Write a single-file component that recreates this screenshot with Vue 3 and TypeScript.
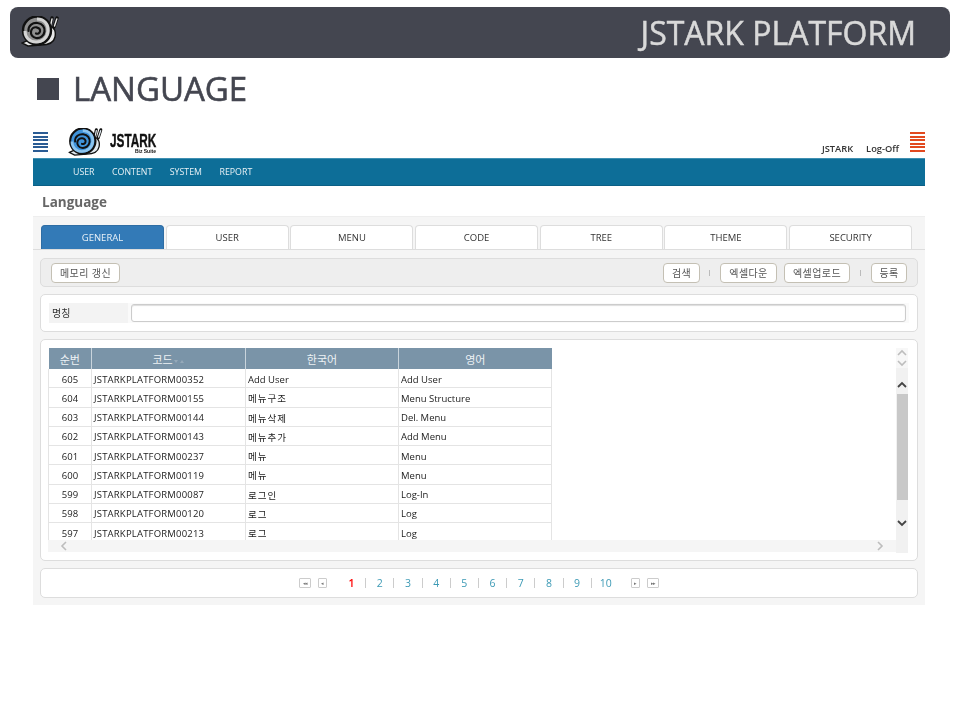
<template>
  <div class="page">
    <header class="slide-bar">
      <svg class="snail-grey" viewBox="0 0 38 31">
        <defs>
          <symbol id="snail" viewBox="0 0 38 31">
            <path d="M29 11 L31 2 M33 11 L36 2" stroke="#111" stroke-width="3.4" stroke-linecap="round" />
            <path d="M29.5 10 L31 3 M33.5 10 L35.8 3" stroke="var(--foot)" stroke-width="1.4" stroke-linecap="round" />
            <path d="M28 10 C34 11 35 16 34 21 C33 26 28 29 20 29 L7 30 L1 27 L8 24 Z" fill="var(--foot)" stroke="#111" stroke-width="1.4" />
            <circle cx="16" cy="14.5" r="14" fill="var(--shell)" stroke="#111" stroke-width="2.4" />
            <path d="M16 3 C24 3 27.5 9 27 15 C26.5 22 21 26 15 26 C8 26 4 21 4 15" fill="none" stroke="var(--shell-light)" stroke-width="3" />
            <path d="M7.5 15 C7 9 12 6.5 16.5 7 C21.5 7.5 24 11.5 23.5 15.5 C23 20 19 22.5 15 22 C11.5 21.5 9.5 18.5 10 15.5 C10.5 12.5 13 11 15.5 11.3 C18 11.7 19.5 13.5 19 15.5 C18.6 17.3 16.5 18.2 15 17.5" fill="none" stroke="#111" stroke-width="2.2" stroke-linecap="round" />
          </symbol>
        </defs>
        <use href="#snail" />
      </svg>
      <span class="slide-title">JSTARK PLATFORM</span>
    </header>

    <h1 class="slide-heading"><i class="heading-mark"></i>LANGUAGE</h1>

    <main class="app" lang="ko">
      <div class="app-head">
        <div class="lines lines-blue"><span v-for="n in 6" :key="n"></span></div>
        <svg class="snail-blue" viewBox="0 0 38 31"><use href="#snail" /></svg>
        <div class="brand">
          <strong>JSTARK</strong>
          <small>Biz Suite</small>
        </div>
        <div class="user-box">
          <span>JSTARK</span>
          <span>Log-Off</span>
        </div>
        <div class="lines lines-red"><span v-for="n in 6" :key="n"></span></div>
      </div>

      <nav class="main-nav">
        <a v-for="item in navItems" :key="item">{{ item }}</a>
      </nav>

      <h2 class="page-title">Language</h2>

      <section class="content">
        <div class="tabs">
          <button
            v-for="(tab, i) in tabs"
            :key="tab"
            class="tab"
            :class="{ active: i === 0 }"
          >
            {{ tab }}
          </button>
        </div>

        <div class="panel toolbar">
          <button class="btn">메모리 갱신</button>
          <div class="toolbar-right">
            <button class="btn btn-search">검색</button>
            <i class="sep"></i>
            <button class="btn btn-down">엑셀다운</button>
            <button class="btn btn-up">엑셀업로드</button>
            <i class="sep"></i>
            <button class="btn btn-add">등록</button>
          </div>
        </div>

        <div class="panel search">
          <label class="search-label">명칭</label>
          <div class="search-field"><input type="text" /></div>
        </div>

        <div class="panel grid-panel">
          <div class="grid-main">
            <div class="grid-view">
              <table class="grid">
                <colgroup>
                  <col style="width: 43px" />
                  <col style="width: 154px" />
                  <col style="width: 153px" />
                  <col style="width: 153px" />
                </colgroup>
                <thead>
                  <tr>
                    <th>순번</th>
                    <th>
                      코드<svg class="sort" viewBox="0 0 12 6">
                        <path d="M1 2 H5 L3 5 Z M7 5 H11 L9 2 Z" />
                      </svg>
                    </th>
                    <th>한국어</th>
                    <th>영어</th>
                  </tr>
                </thead>
                <tbody>
                  <tr v-for="row in rows" :key="row.no">
                    <td class="no">{{ row.no }}</td>
                    <td class="code">{{ row.code }}</td>
                    <td :class="{ hangul: isHangul(row.ko) }">{{ row.ko }}</td>
                    <td>{{ row.en }}</td>
                  </tr>
                </tbody>
              </table>
            </div>
            <div class="hscroll">
              <svg viewBox="0 0 8 10"><path d="M6 1 L2 5 L6 9" /></svg>
              <svg viewBox="0 0 8 10"><path d="M2 1 L6 5 L2 9" /></svg>
            </div>
          </div>
          <div class="vscroll">
            <div class="vscroll-sort">
              <svg viewBox="0 0 10 8"><path d="M1 6 L5 2 L9 6" /></svg>
              <svg viewBox="0 0 10 8"><path d="M1 2 L5 6 L9 2" /></svg>
            </div>
            <div class="vscroll-track">
              <svg class="dark" viewBox="0 0 10 8"><path d="M1 6 L5 2 L9 6" /></svg>
              <div class="thumb"></div>
              <svg class="dark" viewBox="0 0 10 8"><path d="M1 2 L5 6 L9 2" /></svg>
            </div>
          </div>
        </div>

        <div class="panel pager">
          <span class="page-btn wide">◂◂</span>
          <span class="page-btn">◂</span>
          <div class="pages">
            <a
              v-for="n in 10"
              :key="n"
              class="page-no"
              :class="{ current: n === 1 }"
            >{{ n }}</a>
          </div>
          <span class="page-btn">▸</span>
          <span class="page-btn wide">▸▸</span>
        </div>
      </section>
    </main>
  </div>
</template>

<script setup lang="ts">
interface LangRow {
  no: number
  code: string
  ko: string
  en: string
}

const navItems: string[] = ['USER', 'CONTENT', 'SYSTEM', 'REPORT']
const tabs: string[] = ['GENERAL', 'USER', 'MENU', 'CODE', 'TREE', 'THEME', 'SECURITY']

const rows: LangRow[] = [
  { no: 605, code: 'JSTARKPLATFORM00352', ko: 'Add User', en: 'Add User' },
  { no: 604, code: 'JSTARKPLATFORM00155', ko: '메뉴구조', en: 'Menu Structure' },
  { no: 603, code: 'JSTARKPLATFORM00144', ko: '메뉴삭제', en: 'Del. Menu' },
  { no: 602, code: 'JSTARKPLATFORM00143', ko: '메뉴추가', en: 'Add Menu' },
  { no: 601, code: 'JSTARKPLATFORM00237', ko: '메뉴', en: 'Menu' },
  { no: 600, code: 'JSTARKPLATFORM00119', ko: '메뉴', en: 'Menu' },
  { no: 599, code: 'JSTARKPLATFORM00087', ko: '로그인', en: 'Log-In' },
  { no: 598, code: 'JSTARKPLATFORM00120', ko: '로그', en: 'Log' },
  { no: 597, code: 'JSTARKPLATFORM00213', ko: '로그', en: 'Log' }
]

const isHangul = (text: string) => /[가-힣]/.test(text)
</script>

<style>
html,
body {
  margin: 0;
  background: #fff;
}
</style>

<style scoped>
.page {
  width: 960px;
  height: 720px;
  overflow: hidden;
  padding-top: 7px;
  box-sizing: border-box;
  font-family: 'Open Sans', 'Noto Sans CJK KR', sans-serif;
  color: #333;
  filter: blur(0.35px);
}

.slide-bar {
  height: 51px;
  margin: 0 10px;
  padding: 0 34px 0 11px;
  display: flex;
  align-items: center;
  justify-content: space-between;
  background: #444650;
  border-radius: 8px;
}

.snail-grey {
  width: 38px;
  height: 31px;
  margin-top: -3px;
  --shell: #8f8f8f;
  --shell-light: #d4d4d4;
  --foot: #e8e8e8;
}

.slide-title {
  font-size: 32px;
  line-height: 51px;
  color: #d9d9d9;
  -webkit-text-stroke: 0.5px #d9d9d9;
}

.slide-heading {
  height: 44px;
  margin: 8px 0 0 37px;
  display: flex;
  align-items: center;
  gap: 14px;
  font-size: 33px;
  font-weight: 400;
  color: #444650;
  -webkit-text-stroke: 0.6px #444650;
}

.heading-mark {
  width: 22px;
  height: 22px;
  margin-top: 2px;
  background: #444650;
}

.app {
  width: 892px;
  margin: 15px 0 0 33px;
}

.app-head {
  height: 33px;
  display: flex;
  align-items: flex-start;
}

.lines {
  width: 15px;
  margin-top: 7px;
  display: flex;
  flex-direction: column;
  gap: 1.6px;
}

.lines span {
  height: 2px;
}

.lines-blue span {
  background: #2b5c94;
}

.lines-red span {
  background: #e2491f;
}

.snail-blue {
  width: 35px;
  height: 28px;
  margin: 3px 0 0 20px;
  --shell: #3f93da;
  --shell-light: #8cc4ee;
  --foot: #dfe8ee;
}

.brand {
  width: 46px;
  margin: 8px 0 0 7px;
  display: flex;
  flex-direction: column;
  align-items: flex-end;
  color: #111;
}

.brand strong {
  align-self: flex-start;
  font-family: 'Liberation Sans', sans-serif;
  font-weight: 700;
  font-size: 19px;
  line-height: 15px;
  transform: scaleX(0.62);
  transform-origin: left;
  -webkit-text-stroke: 0.4px #111;
}

.brand small {
  font-family: 'Liberation Sans', sans-serif;
  font-weight: 700;
  font-size: 5px;
  line-height: 6px;
}

.user-box {
  margin: 17px 11px 0 auto;
  display: flex;
  gap: 13px;
  font-size: 9.3px;
  line-height: 14px;
  font-weight: 600;
  color: #333;
}

.main-nav {
  height: 28px;
  padding-left: 40px;
  box-sizing: border-box;
  display: flex;
  align-items: center;
  gap: 17.5px;
  background: #0d6e98;
  border-top: 1px solid #3f90b2;
  border-bottom: 1px solid #0b5f85;
}

.main-nav a {
  font-size: 8.8px;
  color: #e8f1f5;
}

.page-title {
  height: 30px;
  margin: 0;
  padding-left: 9px;
  font-size: 13.5px;
  line-height: 33px;
  font-weight: 700;
  color: #666;
}

.content {
  height: 389px;
  padding-top: 8px;
  box-sizing: border-box;
  background: #f5f5f5;
  border-top: 1px solid #eee;
}

.tabs {
  height: 25px;
  padding-left: 8px;
  box-sizing: border-box;
  display: flex;
  gap: 1.7px;
  border-bottom: 1px solid #ddd;
}

.tab {
  width: 123px;
  height: 24px;
  padding: 0;
  font: inherit;
  font-size: 9.5px;
  color: #333;
  background: #fff;
  border: 1px solid #ddd;
  border-bottom: 0;
  border-radius: 4px 4px 0 0;
}

.tab.active {
  color: #e8f1f8;
  background: #337ab7;
  border-color: #2e6da4;
}

.panel {
  width: 878px;
  margin: 0 0 7px 7px;
  box-sizing: border-box;
  background: #fff;
  border: 1px solid #ddd;
  border-radius: 5px;
}

.toolbar {
  height: 29px;
  margin-top: 8px;
  padding: 0 10px;
  display: flex;
  align-items: center;
  justify-content: space-between;
  background: #eee;
}

.toolbar-right {
  display: flex;
  align-items: center;
}

.btn {
  height: 20px;
  padding: 0;
  width: 69px;
  font: inherit;
  font-size: 10px;
  letter-spacing: 0.4px;
  color: #555;
  background: #fff;
  border: 1px solid #c4c0b4;
  border-radius: 4px;
}

.btn-search {
  width: 37px;
  margin-right: -1px;
}

.btn-add {
  width: 36px;
}

.btn-down {
  width: 57px;
  margin-right: 7px;
}

.btn-up {
  width: 66px;
}

.sep {
  width: 1px;
  height: 6px;
  margin: 0 10px;
  background: #bbb;
}

.search {
  height: 38px;
  padding: 8px;
  display: flex;
}

.search-label {
  width: 79px;
  font-size: 10px;
  line-height: 20px;
  padding-left: 3px;
  box-sizing: border-box;
  color: #333;
  background: #f3f3f3;
}

.search-field {
  flex: 1;
  padding-left: 3px;
  display: flex;
  align-items: center;
  background: #fafafa;
}

.search-field input {
  width: 775px;
  height: 18px;
  padding: 0;
  box-sizing: border-box;
  background: #fff;
  border: 1px solid #ccc;
  border-radius: 3px;
  box-shadow: inset 0 1px 1px #ddd;
}

.grid-panel {
  height: 222px;
  margin-bottom: 7px;
  padding: 8px 9px 7px 7px;
  display: flex;
}

.grid-main {
  width: 848px;
  display: flex;
  flex-direction: column;
}

.grid-view {
  height: 192px;
  overflow: hidden;
}

.grid {
  width: 503px;
  table-layout: fixed;
  border-collapse: collapse;
  font-size: 9.5px;
  color: #222;
}

.grid th {
  height: 21px;
  padding: 0;
  font-size: 11px;
  font-weight: 400;
  color: #eef2f5;
  background: #7a94a8;
  border-left: 1px solid #c9d4dc;
}

.grid th:first-child {
  border-left: 0;
}

.sort {
  width: 12px;
  height: 6px;
  fill: #95a9b9;
}

.grid td {
  height: 16.25px;
  padding: 2px 2px 0;
  white-space: nowrap;
  overflow: hidden;
  border: 1px solid #e4e4e4;
  border-top: 0;
}

.grid td.no {
  text-align: center;
}

.grid td.code {
  letter-spacing: 0.2px;
}

.grid td.hangul {
  letter-spacing: 1px;
}

.hscroll {
  height: 12px;
  padding: 0 12px;
  display: flex;
  align-items: center;
  justify-content: space-between;
  background: #f5f5f5;
}

.hscroll svg,
.vscroll svg {
  fill: none;
  stroke: #bdbdbd;
  stroke-width: 1.6;
}

.hscroll svg {
  width: 8px;
  height: 10px;
}

.vscroll {
  width: 12px;
  display: flex;
  flex-direction: column;
}

.vscroll svg {
  width: 10px;
  height: 8px;
  flex: none;
}

.vscroll svg.dark {
  stroke: #444;
  stroke-width: 1.8;
}

.vscroll-sort {
  height: 20px;
  display: flex;
  flex-direction: column;
  align-items: center;
  justify-content: center;
  gap: 2px;
  background: #f7f7f7;
}

.vscroll-track {
  flex: 1;
  padding-top: 13px;
  display: flex;
  flex-direction: column;
  align-items: center;
  background: #f1f1f1;
}

.thumb {
  width: 11px;
  height: 106px;
  margin: 5px 0 19px 1px;
  flex: none;
  background: #c8c8c8;
}

.pager {
  height: 30px;
  margin-bottom: 0;
  padding-left: 258px;
  display: flex;
  align-items: center;
}

.page-btn {
  width: 7px;
  height: 8px;
  margin-right: 7px;
  display: flex;
  align-items: center;
  justify-content: center;
  flex: none;
  font-size: 5px;
  color: #777;
  background: #fff;
  border: 1px solid #ccc;
  border-radius: 1px;
}

.page-btn.wide {
  width: 10px;
  letter-spacing: -1px;
}

.pages {
  width: 297px;
  padding-left: 4px;
  box-sizing: border-box;
  display: flex;
}

.page-no {
  width: 28.2px;
  flex: none;
  font-size: 10.5px;
  line-height: 10px;
  text-align: center;
  color: #3d9ab5;
  border-right: 1px solid #ccc;
  box-sizing: border-box;
}

.page-no:last-child {
  border-right: 0;
}

.page-no.current {
  font-weight: 600;
  color: #f00;
}
</style>
